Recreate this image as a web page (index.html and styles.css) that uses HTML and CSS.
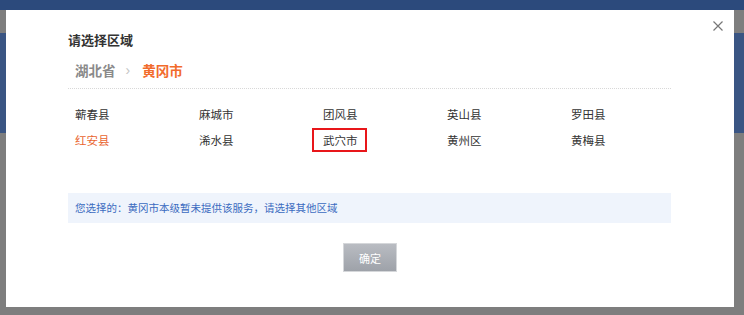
FILE: index.html
```html
<!DOCTYPE html>
<html lang="zh-CN">

<head>
    <meta charset="UTF-8">
    <meta name="viewport" content="width=device-width, initial-scale=1.0">
    <title>请选择区域</title>
    <link rel="stylesheet" href="styles.css">
</head>

<body>
    <div class="dialog">
        <button class="close" aria-label="关闭">
            <svg width="10" height="10" viewBox="0 0 10 10">
                <path d="M0.5 0.5L9.5 9.5M9.5 0.5L0.5 9.5" stroke="#777" stroke-width="1.2" fill="none" />
            </svg>
        </button>
        <div class="title">请选择区域</div>
        <div class="crumbs">
            <span class="crumb">湖北省</span>
            <span class="sep">›</span>
            <span class="crumb current">黄冈市</span>
        </div>
        <div class="areas">
            <span class="area">蕲春县</span>
            <span class="area">麻城市</span>
            <span class="area">团风县</span>
            <span class="area">英山县</span>
            <span class="area">罗田县</span>
            <span class="area active">红安县</span>
            <span class="area">浠水县</span>
            <span class="area"><span class="marked">武穴市</span></span>
            <span class="area">黄州区</span>
            <span class="area">黄梅县</span>
        </div>
        <div class="notice">您选择的：黄冈市本级暂未提供该服务，请选择其他区域</div>
        <div class="actions">
            <button class="confirm">确定</button>
        </div>
    </div>
</body>

</html>
```

FILE: styles.css
```css
body {
    margin: 0;
    padding: 10px 0 0 6px;
    height: 315px;
    box-sizing: border-box;
    overflow: hidden;
    font-family: "Noto Sans CJK SC", "Noto Sans", sans-serif;
    background:
        linear-gradient(#2c4a7c, #2c4a7c) 0 0 / 100% 10px no-repeat,
        linear-gradient(#3a5583, #3a5583) 0 33px / 100% 100px no-repeat,
        #7e7e7e;
}

.dialog {
    position: relative;
    width: 728px;
    height: 297px;
    box-sizing: border-box;
    padding: 20px 0 0 62px;
    background-color: #fff;
}

.close {
    position: absolute;
    top: 11px;
    right: 11px;
    width: 10px;
    height: 10px;
    padding: 0;
    border: none;
    background: none;
    display: flex;
}

.title {
    font-size: 13px;
    font-weight: bold;
    line-height: 20px;
    color: #333;
}

.crumbs {
    margin-top: 10px;
    width: 603px;
    padding: 0 0 8px 7px;
    box-sizing: border-box;
    border-bottom: 1px dotted #d8d8d8;
    display: flex;
    align-items: center;
    line-height: 20px;
}

.crumb {
    font-size: 13.5px;
    font-weight: bold;
    color: #8a8a8a;
}

.crumb.current {
    color: #f26b2c;
}

.sep {
    font-family: "Liberation Sans", sans-serif;
    font-size: 14px;
    color: #c4c4c4;
    margin: 0 12px 0 10px;
}

.areas {
    margin-top: 12px;
    display: grid;
    grid-template-columns: repeat(5, 124px);
}

.area {
    padding-left: 7px;
    font-size: 11.5px;
    line-height: 26px;
    color: #333;
}

.area.active {
    color: #e9652f;
}

.marked {
    display: inline-block;
    margin-left: -11px;
    padding: 0 7px 0 9px;
    line-height: 20px;
    border: 2px solid #e8161a;
}

.notice {
    margin-top: 40px;
    width: 603px;
    height: 30px;
    box-sizing: border-box;
    padding-left: 7px;
    background-color: #eff4fc;
    font-size: 10.5px;
    line-height: 30px;
    color: #3b6bc0;
}

.actions {
    margin: 20px 0 0 -62px;
    display: flex;
    justify-content: center;
}

.confirm {
    width: 54px;
    height: 29px;
    padding: 0;
    border: 1px solid #d5d7da;
    background: linear-gradient(#b9bcc2, #9ea2a9);
    color: #fff;
    font-family: "Noto Sans CJK SC", sans-serif;
    font-size: 11px;
}
```
